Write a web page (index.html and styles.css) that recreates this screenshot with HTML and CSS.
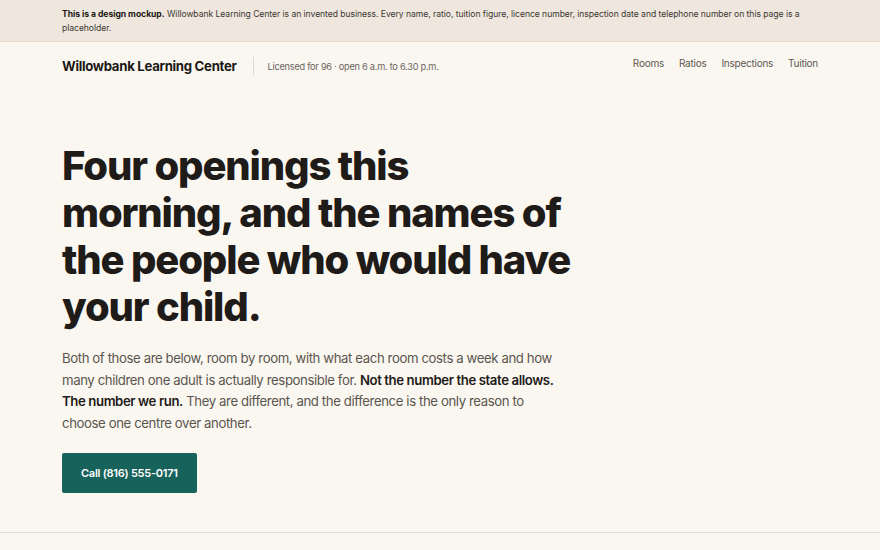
FILE: index.html
```html
<!DOCTYPE html>
<html lang="en">
<head>
<meta charset="utf-8">
<title>Willowbank Learning Center</title>
<link rel="stylesheet" href="styles.css">
</head>
<body>
<div class="notice">
  <p><strong>This is a design mockup.</strong> Willowbank Learning Center is an invented business. Every name, ratio, tuition figure, licence number, inspection date and telephone number on this page is a placeholder.</p>
</div>
<header class="site-header">
  <div class="brand">
    <span class="brand-name">Willowbank Learning Center</span>
    <span class="brand-meta">Licensed for 96 · open 6 a.m. to 6.30 p.m.</span>
  </div>
  <nav class="nav">
    <a href="#">Rooms</a>
    <a href="#">Ratios</a>
    <a href="#">Inspections</a>
    <a href="#">Tuition</a>
  </nav>
</header>
<main class="hero">
  <h1>Four openings this<br> morning, and the names of<br> the people who would have<br> your child.</h1>
  <p class="lede">Both of those are below, room by room, with what each room costs a week and how many children one adult is actually responsible for. <strong>Not the number the state allows. The number we run.</strong> They are different, and the difference is the only reason to choose one centre over another.</p>
  <a class="cta" href="#">Call (816) 555-0171</a>
</main>
<section class="next"></section>
</body>
</html>
```

FILE: styles.css
```css
* { box-sizing: border-box; }
html, body { margin: 0; padding: 0; }
body {
  background: #faf7f1;
  color: #1f1c19;
  font-family: "Inter", "Lato", sans-serif;
  height: 550px;
  overflow: hidden;
}
.notice {
  background: #efe7de;
  border-bottom: 1px solid #e2d9cd;
  padding: 7px 62px 6px;
}
.notice p {
  margin: 0;
  font-size: 8.6px;
  line-height: 14px;
  color: #3b3631;
  letter-spacing: -0.05px;
}
.notice strong { color: #1a1714; font-weight: 700; }
.site-header {
  display: flex;
  justify-content: space-between;
  align-items: flex-start;
  padding: 14px 62px 0;
  height: 90px;
}
.brand { display: flex; align-items: center; padding-top: 1px; }
.brand-name {
  font-weight: 700;
  font-size: 13.2px;
  letter-spacing: -0.3px;
  color: #1c1915;
  padding-right: 16px;
  border-right: 1px solid #ddd6cc;
  line-height: 18px;
}
.brand-meta {
  font-size: 9.2px;
  color: #6a645d;
  padding-left: 14px;
  letter-spacing: -0.25px;
}
.nav { display: flex; gap: 15px; }
.nav a {
  font-size: 10px;
  color: #5e5852;
  text-decoration: none;
  letter-spacing: -0.25px;
  line-height: 14px;
}
.hero {
  padding: 0 62px 39px;
  border-bottom: 1px solid #e2ddd5;
}
.hero h1 {
  margin: 0;
  padding-top: 10px;
  font-size: 40px;
  line-height: 47px;
  font-weight: 800;
  letter-spacing: -1.15px;
  color: #1e1b18;
}
.lede {
  margin: 18px 0 0;
  max-width: 496px;
  font-size: 13.2px;
  line-height: 21.5px;
  color: #5a554f;
  letter-spacing: -0.4px;
}
.lede strong { color: #1e1b18; font-weight: 600; }
.cta {
  display: inline-block;
  margin-top: 19px;
  background: #17625a;
  color: #fff;
  font-size: 11px;
  font-weight: 600;
  text-decoration: none;
  padding: 0 19px;
  height: 40px;
  line-height: 40px;
  border-radius: 2px;
  letter-spacing: -0.25px;
}
.next { height: 20px; }
```
